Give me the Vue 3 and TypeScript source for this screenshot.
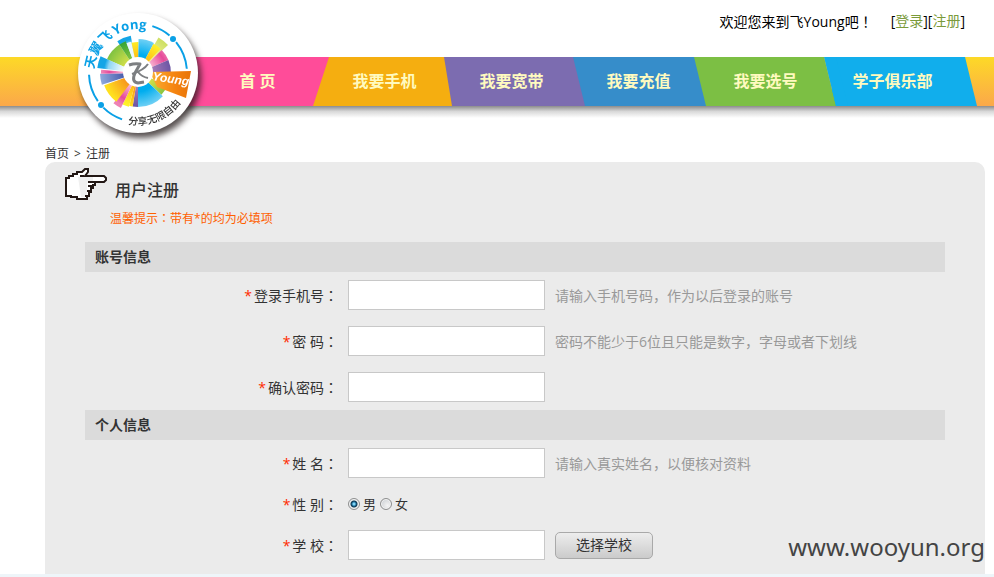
<script setup lang="ts">
import { ref } from 'vue'

interface Field {
  id: string
  label: string
  type: string
  hint?: string
}

interface Wedge {
  from: number
  to: number
  radius: number
  fill: string
}

const navItems: string[] = ['首 页', '我要手机', '我要宽带', '我要充值', '我要选号', '学子俱乐部']

const accountFields: Field[] = [
  { id: 'phone', label: '登录手机号', type: 'text', hint: '请输入手机号码，作为以后登录的账号' },
  { id: 'password', label: '密 码', type: 'password', hint: '密码不能少于6位且只能是数字，字母或者下划线' },
  { id: 'confirm', label: '确认密码', type: 'password' },
]

const form = ref<Record<string, string>>({ phone: '', password: '', confirm: '', name: '', school: '' })
const gender = ref('male')

// Wheel segments of the logo; angles run clockwise from the top.
const wedges: Wedge[] = [
  { from: -33, to: -11, radius: 38, fill: 'url(#w-sky)' },
  { from: -66, to: -33, radius: 34, fill: 'url(#w-lime)' },
  { from: -33, to: -21, radius: 34, fill: 'url(#w-green)' },
  { from: -21, to: -12, radius: 32, fill: '#e9f8fe' },
  { from: -12, to: 1, radius: 31, fill: 'url(#w-yellow)' },
  { from: 1, to: 28, radius: 34, fill: 'url(#w-blue)' },
  { from: 30, to: 47, radius: 41, fill: 'url(#w-pale)' },
  { from: 28, to: 43, radius: 33, fill: 'url(#w-yellow)' },
  { from: 46, to: 67, radius: 33, fill: 'url(#w-pink)' },
  { from: 67, to: 92, radius: 33, fill: 'url(#w-purple)' },
  { from: 112, to: 133, radius: 32, fill: 'url(#w-lime)' },
  { from: 133, to: 180, radius: 34, fill: 'url(#w-blue)' },
  { from: 180, to: 189, radius: 34, fill: 'url(#w-purple)' },
  { from: 189, to: 195, radius: 34, fill: 'url(#w-orange)' },
  { from: 195, to: 206, radius: 35, fill: 'url(#w-yellow)' },
  { from: 206, to: 219, radius: 39, fill: 'url(#w-pink)' },
  { from: 217, to: 250, radius: 36, fill: 'url(#w-orange)' },
  { from: 252, to: 269, radius: 38, fill: 'url(#w-violet)' },
  { from: 269, to: 275, radius: 37, fill: 'url(#w-pink)' },
  { from: 277, to: 294, radius: 41, fill: 'url(#w-sky)' },
]

function point(angle: number, radius: number): string {
  const a = (angle * Math.PI) / 180
  return `${(Math.sin(a) * radius).toFixed(2)} ${(-Math.cos(a) * radius).toFixed(2)}`
}

function wedgePath(w: Wedge): string {
  return `M0 0L${point(w.from, w.radius)}A${w.radius} ${w.radius} 0 0 1 ${point(w.to, w.radius)}Z`
}

function arc(from: number, to: number, radius: number): string {
  const sweep = to > from ? 1 : 0
  return `M${point(from, radius)}A${radius} ${radius} 0 0 ${sweep} ${point(to, radius)}`
}
</script>

<template>
  <div class="page">
    <header class="header">
      <div class="welcome">
        <span>欢迎您来到飞Young吧<span class="mid">！</span></span>
        <span>[<a href="#login">登录</a>][<a href="#register">注册</a>]</span>
      </div>

      <nav class="nav">
        <svg class="nav-bands" width="977" height="49" viewBox="0 0 977 49" aria-hidden="true">
          <path d="M836 0H965L977 49H830Z" fill="#11aeec" />
          <path d="M690 0H824L836 49H690Z" fill="#7cbf44" />
          <path d="M570 0H694L706 49H570Z" fill="#368dca" />
          <path d="M440 0H573L585 49H440Z" fill="#7c6cb0" />
          <path d="M320 0H444L452 49H310Z" fill="#f5ae10" />
          <path d="M180 0H329L313 49H180Z" fill="#ff4c99" />
          <path d="M824 0H836L848 49H836Z" fill="#11aeec" />
        </svg>
        <ul class="nav-list">
          <li v-for="item in navItems" :key="item">
            <a href="#">{{ item }}</a>
          </li>
        </ul>
      </nav>
      <div class="nav-shadow"></div>

      <a class="logo" href="#" aria-label="天翼飞Yong">
        <svg width="120" height="120" viewBox="-60 -60 120 120">
          <defs>
            <radialGradient id="w-blue" gradientUnits="userSpaceOnUse" cx="0" cy="0" r="34"><stop offset=".55" stop-color="#00adef" /><stop offset="1" stop-color="#6fd0f5" /></radialGradient>
            <radialGradient id="w-sky" gradientUnits="userSpaceOnUse" cx="0" cy="0" r="40"><stop offset=".4" stop-color="#f2fbff" /><stop offset=".75" stop-color="#8fd6f5" /><stop offset=".86" stop-color="#14a5e6" /></radialGradient>
            <radialGradient id="w-lime" gradientUnits="userSpaceOnUse" cx="0" cy="0" r="34"><stop offset=".4" stop-color="#d5e14b" /><stop offset="1" stop-color="#7fc241" /></radialGradient>
            <radialGradient id="w-green" gradientUnits="userSpaceOnUse" cx="0" cy="0" r="34"><stop offset=".4" stop-color="#8dc63f" /><stop offset="1" stop-color="#36a536" /></radialGradient>
            <radialGradient id="w-yellow" gradientUnits="userSpaceOnUse" cx="0" cy="0" r="34"><stop offset=".4" stop-color="#fdb913" /><stop offset="1" stop-color="#fff42a" /></radialGradient>
            <radialGradient id="w-pale" gradientUnits="userSpaceOnUse" cx="0" cy="0" r="40"><stop offset=".5" stop-color="#f5f39a" /><stop offset="1" stop-color="#cfe066" /></radialGradient>
            <radialGradient id="w-pink" gradientUnits="userSpaceOnUse" cx="0" cy="0" r="36"><stop offset=".4" stop-color="#f9b8d2" /><stop offset=".8" stop-color="#e6499a" /><stop offset="1" stop-color="#ee82b5" /></radialGradient>
            <radialGradient id="w-purple" gradientUnits="userSpaceOnUse" cx="0" cy="0" r="34"><stop offset=".4" stop-color="#a77bb9" /><stop offset="1" stop-color="#6a54a3" /></radialGradient>
            <radialGradient id="w-violet" gradientUnits="userSpaceOnUse" cx="0" cy="0" r="38"><stop offset=".4" stop-color="#4c5fae" /><stop offset="1" stop-color="#8fa9dc" /></radialGradient>
            <radialGradient id="w-orange" gradientUnits="userSpaceOnUse" cx="0" cy="0" r="34"><stop offset=".4" stop-color="#f7941d" /><stop offset="1" stop-color="#ffe01f" /></radialGradient>
            <linearGradient id="w-flag" x1="0" x2="1"><stop offset="0" stop-color="#fbb034" /><stop offset=".6" stop-color="#f58410" /><stop offset="1" stop-color="#e87408" /></linearGradient>
            <path id="ring-top" :d="arc(-85, 30, 44)" />
            <path id="ring-bottom" :d="arc(191, 100, 52)" />
          </defs>
          <circle r="60" fill="#fff" />
          <path v-for="(w, i) in wedges" :key="i" :d="wedgePath(w)" :fill="w.fill" />
          <path d="M12 -1L53 -2L48 25L19 14Z" fill="url(#w-flag)" />
          <circle r="15" fill="#fff" cy="-1" />
          <g fill="none" stroke="#7d7f82" stroke-width="3" stroke-linejoin="round">
            <path d="M-9 -8Q-3 -10 2 -9L-3 0Q-7 9 0 10L6 9" />
            <path d="M10 -9Q6 -3 -6 1M0 -1Q4 4 10 5" stroke-width="2" />
          </g>
          <text class="young" transform="translate(14 7) rotate(9)">Young</text>
          <g fill="none" stroke="#0aa0e6" stroke-width="2">
            <path :d="arc(17, 40, 49)" />
            <path :d="arc(51, 85, 49)" />
            <path :d="arc(199, 225, 49)" />
            <path :d="arc(235, 268, 49)" />
          </g>
          <circle cx="35" cy="-34" r="3" fill="#0aa0e6" />
          <circle cx="-37" cy="32" r="3" fill="#0aa0e6" />
          <text class="ring"><textPath href="#ring-top">天翼飞</textPath></text>
          <text class="ring"><textPath href="#ring-top" startOffset="41">Yong</textPath></text>
          <text class="slogan"><textPath href="#ring-bottom">分享无限自由</textPath></text>
        </svg>
      </a>
    </header>

    <main class="main">
      <div class="crumbs"><a href="#">首页</a><span>&gt;</span><span>注册</span></div>

      <form class="panel" @submit.prevent>
        <div class="panel-head">
          <svg class="hand" width="43" height="33" viewBox="0 0 43 33" aria-hidden="true">
            <path d="M1 10H4V8H8V6H12V4H17L20 1H23V4L20 8H39L41 10V12L39 14H30V17H28V20H26V24H24V28H22V31H12V29H6V28H1Z" fill="#fff" stroke="#231815" stroke-width="2" />
            <path d="M13 9L16 29H22V15H28V9Z" fill="#f0f0f0" />
            <path d="M19 8H15M30 14H23M29 18H23M27 23H22M24 28H20" fill="none" stroke="#231815" stroke-width="2" />
          </svg>
          <h1>用户注册</h1>
        </div>
        <p class="notice">温馨提示<span class="mid">：</span>带有*的均为必填项</p>

        <h2>账号信息</h2>
        <div v-for="field in accountFields" :key="field.id" class="row">
          <label class="name" :for="field.id"><i>*</i>{{ field.label }}<span class="mid">：</span></label>
          <input :id="field.id" v-model="form[field.id]" class="box" :type="field.type" />
          <span v-if="field.hint" class="hint">{{ field.hint }}</span>
        </div>

        <h2>个人信息</h2>
        <div class="row">
          <label class="name" for="name"><i>*</i>姓 名<span class="mid">：</span></label>
          <input id="name" v-model="form.name" class="box" type="text" />
          <span class="hint">请输入真实姓名，以便核对资料</span>
        </div>
        <div class="row short" role="radiogroup" aria-labelledby="gender-label">
          <span id="gender-label" class="name"><i>*</i>性 别<span class="mid">：</span></span>
          <div class="choices">
            <label><input v-model="gender" type="radio" name="gender" value="male" />男</label>
            <label><input v-model="gender" type="radio" name="gender" value="female" />女</label>
          </div>
        </div>
        <div class="row">
          <label class="name" for="school"><i>*</i>学 校<span class="mid">：</span></label>
          <input id="school" v-model="form.school" class="box" type="text" />
          <button class="pick" type="button">选择学校</button>
        </div>
        <span class="watermark">www.wooyun.org</span>
      </form>
    </main>
  </div>
</template>

<style>
body {
  background: #eef5f9;
}
</style>

<style scoped>
.page {
  background: #fff;
  color: #333;
  font-family: "Open Sans", "Noto Sans CJK SC", sans-serif;
  font-size: 14px;
  line-height: 20px;
}

a {
  color: inherit;
  text-decoration: none;
}

.mid {
  font-family: "Noto Sans CJK TC", sans-serif;
}

.header {
  position: relative;
}

.welcome {
  display: flex;
  justify-content: flex-end;
  gap: 18px;
  height: 46px;
  padding: 11px 29px 0 0;
  box-sizing: border-box;
  margin-bottom: 11px;
  color: #000;
}

.welcome a {
  color: #7a9a3a;
}

.nav {
  display: grid;
  height: 49px;
  overflow: hidden;
  background: linear-gradient(#fdd927, #fba84a);
}

.nav-bands,
.nav-list {
  grid-area: 1 / 1;
}

.nav-list {
  display: flex;
  margin: 0;
  padding: 0 0 0 194px;
  list-style: none;
}

.nav-list a {
  display: block;
  width: 127px;
  color: #fffabf;
  font-size: 16px;
  font-weight: 700;
  line-height: 48px;
  text-align: center;
  white-space: nowrap;
}

.nav-shadow {
  height: 12px;
  background: linear-gradient(#8c8c8c, #d8d8d8 45%, #fff);
}

.logo {
  position: absolute;
  top: 13px;
  left: 78px;
}

.logo svg {
  display: block;
  overflow: visible;
  filter: drop-shadow(3px 5px 3px rgba(30, 20, 20, 0.75));
}

.ring {
  fill: #0aa0e6;
  font-size: 13px;
  font-weight: 700;
}

.slogan {
  fill: #333;
  font-size: 10px;
  font-weight: 500;
}

.young {
  fill: #fff;
  font-family: "Liberation Sans", sans-serif;
  font-size: 12px;
  font-style: italic;
  font-weight: 700;
}

.main {
  padding: 26px 9px 0 45px;
}

.crumbs {
  display: flex;
  gap: 5px;
  height: 18px;
  font-size: 12px;
}

.panel {
  position: relative;
  padding: 0 40px 6px;
  border-radius: 10px 10px 0 0;
  background: #ebebeb;
}

.panel-head {
  display: flex;
  gap: 7px;
  height: 43px;
  margin-left: -20px;
}

.hand {
  margin-top: 6px;
}

h1,
h2,
p {
  margin: 0;
}

h1 {
  padding-top: 18px;
  font-size: 16px;
  font-weight: 500;
}

.notice {
  height: 37px;
  padding-left: 25px;
  color: #ff6000;
  font-size: 12px;
  line-height: 26px;
}

h2 {
  padding-left: 10px;
  background: #dbdbdb;
  font-size: 14px;
  font-weight: 700;
  line-height: 30px;
}

.row {
  display: flex;
  align-items: center;
  height: 46px;
}

.short {
  height: 36px;
}

.name {
  width: 253px;
  margin-right: 10px;
  text-align: right;
}

.name i {
  margin-right: 2px;
  color: #ff2a00;
  font-style: normal;
}

.box {
  width: 197px;
  height: 30px;
  margin: 0 10px 0 0;
  padding: 0 6px;
  box-sizing: border-box;
  border: 1px solid #c8c8c8;
  background: #fff;
  font: inherit;
}

.hint {
  padding-top: 2px;
  color: #999;
}

.choices {
  display: flex;
  gap: 4px;
}

.choices label {
  display: flex;
  align-items: center;
  gap: 3px;
  font-size: 13px;
}

.choices input {
  appearance: none;
  width: 12px;
  height: 12px;
  margin: 0;
  box-sizing: border-box;
  border: 1px solid #8e8f8f;
  border-radius: 50%;
  background: radial-gradient(circle at 65% 65%, #f4f4f4, #c4c9ce);
  box-shadow: inset 0 0 0 1px #f4f4f4;
}

.choices input:checked {
  background: radial-gradient(circle at 50% 50%, #7fd3f3 0 1px, #1a6d9c 2px, #10384f 3px, #dfe3e6 4px);
}

.pick {
  width: 98px;
  height: 27px;
  padding: 0;
  border: 1px solid #a9a9a9;
  border-radius: 5px;
  background: linear-gradient(#ededed, #cbcbcb);
  color: #333;
  font: inherit;
}

.watermark {
  position: absolute;
  right: 0;
  bottom: 10px;
  color: #444;
  font-family: "Noto Sans", sans-serif;
  font-size: 24px;
  line-height: 34px;
}
</style>
